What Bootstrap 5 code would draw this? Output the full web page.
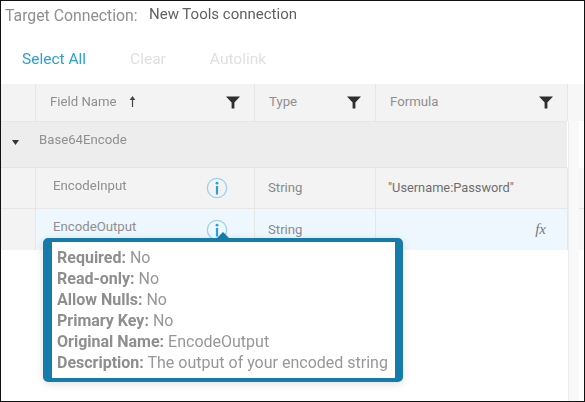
<!DOCTYPE html>
<html lang="en"><head><meta charset="utf-8"><title>Mapping</title>
<link href="https://cdn.jsdelivr.net/npm/bootstrap@5.3.0/dist/css/bootstrap.min.css" rel="stylesheet">
<style>
html,body{margin:0;height:100%;background:#fff}
body{font-family:Roboto,"Liberation Sans",sans-serif;color:#8c8c8c;overflow:hidden}
.frame{width:585px;height:402px;border:1px solid #111;position:relative;overflow:hidden;background:#fff}
.soft{filter:blur(.35px);height:100%}
.conn{height:83px;flex:none}
.conn-top{padding:3px 0 0 4px;height:48px;align-items:flex-start}
.lab{font-size:15.8px;color:#8f8f8f;line-height:24px;width:144px}
.val{font-size:15px;color:#5f5f5f;line-height:21px}
.acts{padding-left:21px;font-size:15.5px;line-height:20px;gap:44px;font-weight:400}
.act-on{color:#2a9fdc}.act-off{color:#dfdfdf}
.grid-row{display:grid;grid-template-columns:34px 218px 120px 191px 1fr;column-gap:1px;background:#e6e6e6}
.cell{background:#f3f3f3;font-size:13.2px;color:#8f8f8f;display:flex;align-items:center;min-width:0}
.head{height:37px}.head .cell{padding:0 14px 2px 14px;justify-content:space-between}
.srt{margin-left:11px}
.grp{height:47px;padding-bottom:5px;display:flex;align-items:center;background:#ededed;font-size:13.2px;color:#8f8f8f;border-top:1px solid #e6e6e6;border-bottom:1px solid #e3e3e3;margin-right:17px}
.grp-ar{width:28px;padding-left:11px;display:flex}
.grp-name{margin-bottom:5px;margin-left:10px}
.r1{height:41px;border-bottom:1px solid #e6e6e6}
.r2{height:41px}
.r1 .cell,.r2 .cell{padding-left:13px;color:#8a8a8a}
.r1 .cell:nth-child(2),.r2 .cell:nth-child(2){padding:0 26px 0 17px;justify-content:space-between;color:#8f8f8f}
.nm{margin-bottom:4px}
.r2 .nm{margin-bottom:6px}
.r1 .cell:nth-child(4){color:#6e6e6e;font-size:12.8px;padding-left:12px}
.r2 .cell:nth-child(n+2){background:#eef7fe}
.r2 .cell:last-child,.r1 .cell:last-child,.head .cell:last-child{background:#f7f7f7;padding:0}
.fx{font-family:"Liberation Serif",serif;font-style:italic;font-size:15px;color:#777;margin-left:auto;margin-right:21px}
.rail{position:absolute;left:567px;top:120px;bottom:0;width:11px;background:#f9f9f9;border-left:1px solid #ececec}
.tip{position:absolute;left:42px;top:237px;width:360px;height:144px;border:solid #147bab;border-width:4px 8px 4px 9px;border-radius:5px;background:#fff;padding:6px 4px 0 5px;font-size:16px;line-height:20.9px;color:#979797;box-shadow:0 2px 8px rgba(0,0,0,.12);white-space:nowrap}
.tip b{font-weight:700;color:#8e8e8e}
.tip-ar{position:absolute;left:165px;top:-10px;width:0;height:0;border:solid transparent;border-width:0 6.5px 6px;border-bottom-color:#147bab}
</style></head><body>
<div class="frame"><div class="soft">
  <div class="conn d-flex flex-column">
    <div class="conn-top d-flex"><span class="lab">Target Connection:</span><span class="val">New Tools connection</span></div>
    <div class="acts d-flex"><span class="act-on">Select All</span><span class="act-off">Clear</span><span class="act-off">Autolink</span></div>
  </div>
  <div class="grid-row head">
    <div class="cell"></div>
    <div class="cell"><span class="d-flex align-items-center">Field Name<svg class="srt" width="9" height="13" viewBox="0 0 9 13"><path d="M4.5 1 1.6 5h2.3v7h1.2V5h2.3z" fill="#444"/></svg></span><svg width="14" height="14" viewBox="0 0 15 14"><path d="M0 1h15L9 7.5V14H6V7.5z" fill="#2f2f2f"/></svg></div>
    <div class="cell">Type<svg width="14" height="14" viewBox="0 0 15 14"><path d="M0 1h15L9 7.5V14H6V7.5z" fill="#2f2f2f"/></svg></div>
    <div class="cell">Formula<svg width="14" height="14" viewBox="0 0 15 14"><path d="M0 1h15L9 7.5V14H6V7.5z" fill="#2f2f2f"/></svg></div>
    <div class="cell"></div>
  </div>
  <div class="grp"><span class="grp-ar"><svg width="7" height="5" viewBox="0 0 7 5"><path d="M0 0h7L3.5 5z" fill="#333"/></svg></span><span class="grp-name">Base64Encode</span></div>
  <div class="grid-row r1">
    <div class="cell"></div>
    <div class="cell"><span class="nm">EncodeInput</span><svg width="22" height="22" viewBox="0 0 22 22"><circle cx="11" cy="11" r="9.7" fill="none" stroke="#9fd0ec" stroke-width="1.3"/><rect x="9.9" y="9" width="2.2" height="8.5" fill="#2a9fdc"/><circle cx="11" cy="6.2" r="1.4" fill="#2a9fdc"/></svg></div>
    <div class="cell">String</div>
    <div class="cell">"Username:Password"</div>
    <div class="cell"></div>
  </div>
  <div class="grid-row r2">
    <div class="cell"></div>
    <div class="cell"><span class="nm">EncodeOutput</span><svg width="22" height="22" viewBox="0 0 22 22"><circle cx="11" cy="11" r="9.7" fill="none" stroke="#9fd0ec" stroke-width="1.3"/><rect x="9.9" y="9" width="2.2" height="8.5" fill="#2a9fdc"/><circle cx="11" cy="6.2" r="1.4" fill="#2a9fdc"/></svg></div>
    <div class="cell">String</div>
    <div class="cell"><span class="fx">fx</span></div>
    <div class="cell"></div>
  </div>
  <div class="rail"></div>
  <div class="tip">
    <span class="tip-ar"></span>
    <div><b>Required:</b> No</div>
    <div><b>Read-only:</b> No</div>
    <div><b>Allow Nulls:</b> No</div>
    <div><b>Primary Key:</b> No</div>
    <div><b>Original Name:</b> EncodeOutput</div>
    <div><b>Description:</b> The output of your encoded string</div>
  </div>
</div></div>
<script src="https://cdn.jsdelivr.net/npm/bootstrap@5.3.0/dist/js/bootstrap.bundle.min.js"></script>
</body></html>
